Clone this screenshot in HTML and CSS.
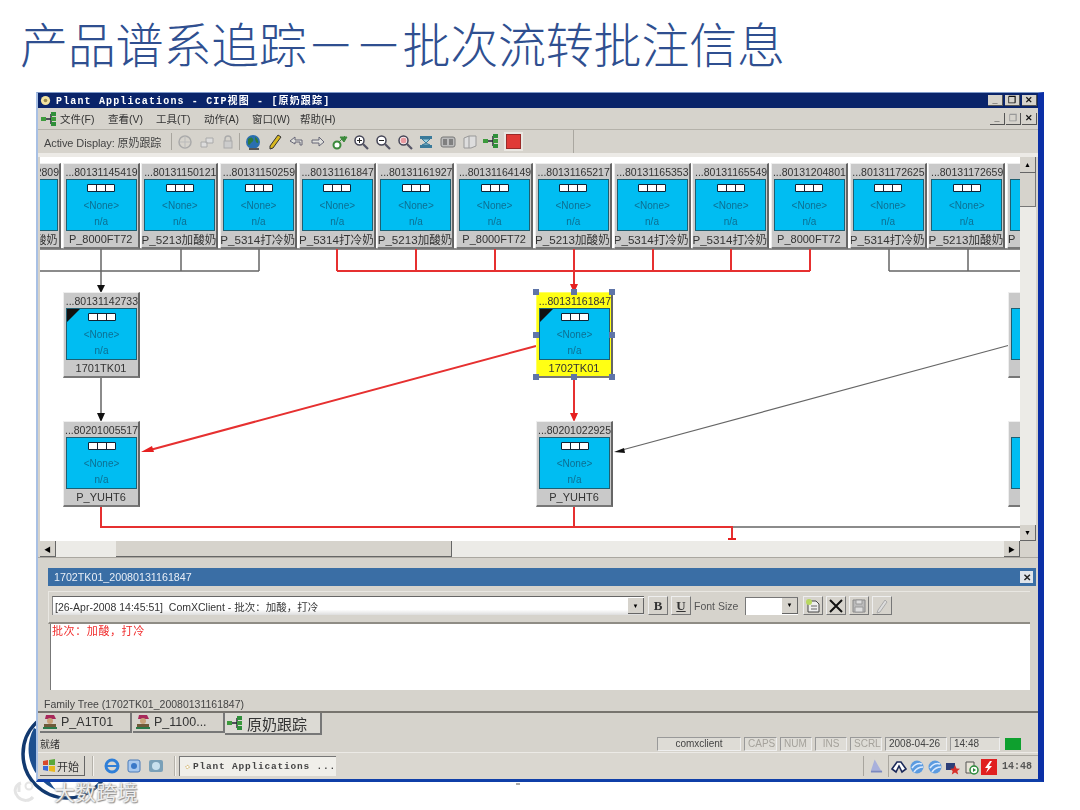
FILE: index.html
```html
<!DOCTYPE html>
<html lang="zh-CN">
<head>
    <meta charset="UTF-8">
    <title>产品谱系追踪－－批次流转批注信息</title>
    <link rel="stylesheet" href="styles.css">
</head>
<body>
    <svg width="0" height="0" class="defs">
        <symbol id="ico-tree" viewBox="0 0 16 14">
            <path d="M3 7h8M10 2v10" stroke="#223" stroke-width="1.4" fill="none"/>
            <rect x="0" y="5" width="5" height="4" fill="#3c9a3c"/>
            <rect x="10" y="0" width="5" height="4" fill="#2f8f3a"/>
            <rect x="10" y="5" width="5" height="4" fill="#3c9a3c"/>
            <rect x="10" y="10" width="5" height="4" fill="#2f8f3a"/>
        </symbol>
        <symbol id="ico-person" viewBox="0 0 16 16">
            <path d="M4 1h8l2 4H3z" fill="#a8285a"/>
            <circle cx="8" cy="7" r="3" fill="#c9a27a"/>
            <path d="M2 10h12v5H2z" fill="#6f5a3a"/>
            <path d="M1 13h14v2H1z" fill="#2a7a4a"/>
        </symbol>
        <symbol id="ico-mag" viewBox="0 0 16 16">
            <circle cx="6.5" cy="6.5" r="4.5" fill="#fff" stroke="#445" stroke-width="1.5"/>
            <path d="M10 10l5 5" stroke="#556" stroke-width="2.2"/>
        </symbol>
        <symbol id="ico-globe" viewBox="0 0 16 16">
            <circle cx="8" cy="8" r="7" fill="#2a6fb0"/>
            <path d="M3 5c2-2 4-2 5 0s-1 3-2 4-2 3-3 1zM10 3c2 1 4 4 3 6-2 0-3-2-3-6z" fill="#2f7a3c"/>
        </symbol>
        <symbol id="ico-ball" viewBox="0 0 16 16">
            <circle cx="8" cy="8" r="6.5" fill="#5b9be0"/>
            <path d="M3 9c3-4 7-5 10-4M5 13c2-3 5-5 9-5" stroke="#dcebff" stroke-width="1.6" fill="none"/>
        </symbol>
    </svg>

    <h1 class="slide-title">产品谱系追踪－－批次流转批注信息</h1>

    <svg class="logo" width="110" height="95" viewBox="0 0 110 95">
        <circle cx="55" cy="42" r="44" fill="#fff" stroke="#12396f" stroke-width="3.5"/>
        <path d="M22 16C10 38 18 66 44 78 30 62 24 40 30 20z" fill="#1d4f8f"/>
    </svg>

    <div class="app">
        <div class="titlebar">
            <svg class="app-ico" width="11" height="11" viewBox="0 0 12 12"><circle cx="6" cy="6" r="5" fill="#f2e2a0"/><circle cx="6" cy="6" r="2" fill="#9a8a50"/></svg>
            <span class="app-name">Plant Applications - CIP视图 - [原奶跟踪]</span>
            <div class="win-btns">
                <b class="win-btn">_</b><b class="win-btn">&#10064;</b><b class="win-btn">✕</b>
            </div>
        </div>

        <div class="menubar">
            <svg class="menu-ico"><use href="#ico-tree"/></svg>
            <span class="menu-item">文件(F)</span>
            <span class="menu-item">查看(V)</span>
            <span class="menu-item">工具(T)</span>
            <span class="menu-item">动作(A)</span>
            <span class="menu-item">窗口(W)</span>
            <span class="menu-item">帮助(H)</span>
            <div class="win-btns flat">
                <b class="win-btn">_</b><b class="win-btn off">&#10064;</b><b class="win-btn">✕</b>
            </div>
        </div>

        <div class="toolbar-row">
            <div class="toolbar">
                <span class="active-display">Active Display: 原奶跟踪</span>
                <i class="tb-sep"></i>
                <span class="tool"><svg viewBox="0 0 16 16"><circle cx="8" cy="8" r="6" fill="none" stroke="#aaa" stroke-width="1.5"/><path d="M3 8h10M8 2v12" stroke="#bbb"/></svg></span>
                <span class="tool"><svg viewBox="0 0 16 16"><path d="M2 8h6v5H2zM7 4h7v5H7z" fill="#ddd" stroke="#aaa"/></svg></span>
                <span class="tool"><svg viewBox="0 0 16 16"><path d="M5 7V5a3 3 0 0 1 6 0v2" fill="none" stroke="#aaa" stroke-width="1.4"/><rect x="4" y="7" width="8" height="7" fill="#ccc" stroke="#aaa"/></svg></span>
                <i class="tb-sep second"></i>
                <span class="tool"><svg viewBox="0 0 16 16"><use href="#ico-globe"/><path d="M4 14h10v2H4z" fill="#555"/></svg></span>
                <span class="tool"><svg viewBox="0 0 16 16"><path d="M11 1l3 2-8 11-3 1 0-3z" fill="#d8b820" stroke="#333"/></svg></span>
                <span class="tool"><svg viewBox="0 0 16 16"><path d="M7 3L2 7l5 3V8h5v3h2V6H7z" fill="#e0e0dc" stroke="#667"/></svg></span>
                <span class="tool"><svg viewBox="0 0 16 16"><path d="M9 3l5 5-5 4v-3H2V6h7z" fill="#e0e0dc" stroke="#667"/></svg></span>
                <span class="tool"><svg viewBox="0 0 16 16"><circle cx="5" cy="11" r="3.5" fill="#fff" stroke="#3c8a3c" stroke-width="2"/><path d="M7 8l6-6M8 3h7l-3 5z" fill="#3c8a3c" stroke="#3c8a3c"/></svg></span>
                <span class="tool"><svg viewBox="0 0 16 16"><use href="#ico-mag"/><path d="M4 6.500h5M6.500 4v5" stroke="#222"/></svg></span>
                <span class="tool"><svg viewBox="0 0 16 16"><use href="#ico-mag"/><path d="M4 6.500h5" stroke="#222"/></svg></span>
                <span class="tool"><svg viewBox="0 0 16 16"><use href="#ico-mag"/><circle cx="6.500" cy="6.500" r="3" fill="#e89aa0"/></svg></span>
                <span class="tool"><svg viewBox="0 0 16 16"><path d="M2 2h12v3H2zM2 11h12v3H2z" fill="#3a7a9a"/><path d="M4 5h8L8 9l4 2H4l4-2z" fill="#9ad0e0" stroke="#3a7a9a"/></svg></span>
                <span class="tool"><svg viewBox="0 0 16 16"><rect x="1" y="3" width="14" height="10" rx="2" fill="#bbb" stroke="#777"/><path d="M6 5v6M10 5v6M4 5v6M12 5v6" stroke="#444"/></svg></span>
                <span class="tool"><svg viewBox="0 0 16 16"><path d="M2 4l5-2h7v10l-5 2H2zM7 2v12" fill="#ddd" stroke="#999"/></svg></span>
                <span class="tool"><svg viewBox="0 0 16 16"><use href="#ico-tree" width="16" height="14"/></svg></span>
                <span class="tool stop"><i></i></span>
            </div>
        </div>

        <div class="diagram-row">
            <div class="canvas">
                <svg class="links" width="980" height="384" viewBox="40 157 980 384">
                    <g class="gray">
                        <path d="M40 249H1020M40 271H259M181 249V271M259 249V271M101 249V286M889 249V271M968 249V271M889 271H1020M101 378V416M732 527H1020"/>
                        <path class="thin" d="M1010 345L622 450"/>
                    </g>
                    <path class="black-head" d="M97 285h8l-4 8zM97 413h8l-4 9zM614 452l10-4 1 5z"/>
                    <g class="red">
                        <path d="M337 249V271M416 249V271M495 249V271M574 249V286M653 249V271M731 249V271M810 249V271M337 271H810M574 378V416M536 346L150 450M101 506V527H732V538M574 506V527"/>
                    </g>
                    <path class="red-head" d="M570 284h8l-4 9zM570 413h8l-4 9zM141 452l11-6 2 6zM728 538h8v2h-8z"/>
                </svg>

                <div class="top-row">
                    <div class="node"><div class="node-id">...80131142809</div><div class="node-body"><div class="lamps"><i></i><i></i><i></i></div><span>&lt;None&gt;</span><span>n/a</span></div><div class="node-name">P_5213加酸奶</div></div>
                    <div class="node"><div class="node-id">...80131145419</div><div class="node-body"><div class="lamps"><i></i><i></i><i></i></div><span>&lt;None&gt;</span><span>n/a</span></div><div class="node-name">P_8000FT72</div></div>
                    <div class="node"><div class="node-id">...80131150121</div><div class="node-body"><div class="lamps"><i></i><i></i><i></i></div><span>&lt;None&gt;</span><span>n/a</span></div><div class="node-name long">P_5213加酸奶</div></div>
                    <div class="node"><div class="node-id">...80131150259</div><div class="node-body"><div class="lamps"><i></i><i></i><i></i></div><span>&lt;None&gt;</span><span>n/a</span></div><div class="node-name long">P_5314打冷奶</div></div>
                    <div class="node"><div class="node-id">...80131161847</div><div class="node-body"><div class="lamps"><i></i><i></i><i></i></div><span>&lt;None&gt;</span><span>n/a</span></div><div class="node-name long">P_5314打冷奶</div></div>
                    <div class="node"><div class="node-id">...80131161927</div><div class="node-body"><div class="lamps"><i></i><i></i><i></i></div><span>&lt;None&gt;</span><span>n/a</span></div><div class="node-name long">P_5213加酸奶</div></div>
                    <div class="node"><div class="node-id">...80131164149</div><div class="node-body"><div class="lamps"><i></i><i></i><i></i></div><span>&lt;None&gt;</span><span>n/a</span></div><div class="node-name">P_8000FT72</div></div>
                    <div class="node"><div class="node-id">...80131165217</div><div class="node-body"><div class="lamps"><i></i><i></i><i></i></div><span>&lt;None&gt;</span><span>n/a</span></div><div class="node-name long">P_5213加酸奶</div></div>
                    <div class="node"><div class="node-id">...80131165353</div><div class="node-body"><div class="lamps"><i></i><i></i><i></i></div><span>&lt;None&gt;</span><span>n/a</span></div><div class="node-name long">P_5314打冷奶</div></div>
                    <div class="node"><div class="node-id">...80131165549</div><div class="node-body"><div class="lamps"><i></i><i></i><i></i></div><span>&lt;None&gt;</span><span>n/a</span></div><div class="node-name long">P_5314打冷奶</div></div>
                    <div class="node"><div class="node-id">...80131204801</div><div class="node-body"><div class="lamps"><i></i><i></i><i></i></div><span>&lt;None&gt;</span><span>n/a</span></div><div class="node-name">P_8000FT72</div></div>
                    <div class="node"><div class="node-id">...80131172625</div><div class="node-body"><div class="lamps"><i></i><i></i><i></i></div><span>&lt;None&gt;</span><span>n/a</span></div><div class="node-name long">P_5314打冷奶</div></div>
                    <div class="node"><div class="node-id">...80131172659</div><div class="node-body"><div class="lamps"><i></i><i></i><i></i></div><span>&lt;None&gt;</span><span>n/a</span></div><div class="node-name long">P_5213加酸奶</div></div>
                    <div class="node"><div class="node-id"></div><div class="node-body"></div><div class="node-name left">P</div></div>
                </div>

                <div class="node free col-a row-2"><div class="node-id">...80131142733</div><div class="node-body flagged"><div class="lamps"><i></i><i></i><i></i></div><span>&lt;None&gt;</span><span>n/a</span></div><div class="node-name">1701TK01</div></div>
                <div class="node free col-a row-3"><div class="node-id">...80201005517</div><div class="node-body"><div class="lamps"><i></i><i></i><i></i></div><span>&lt;None&gt;</span><span>n/a</span></div><div class="node-name">P_YUHT6</div></div>
                <div class="node free col-b row-2 selected">
                    <div class="node-id">...80131161847</div><div class="node-body flagged"><div class="lamps"><i></i><i></i><i></i></div><span>&lt;None&gt;</span><span>n/a</span></div><div class="node-name">1702TK01</div>
                    <i class="grip tl"></i><i class="grip tc"></i><i class="grip tr"></i><i class="grip ml"></i><i class="grip mr"></i><i class="grip bl"></i><i class="grip bc"></i><i class="grip br"></i>
                </div>
                <div class="node free col-b row-3"><div class="node-id">...80201022925</div><div class="node-body"><div class="lamps"><i></i><i></i><i></i></div><span>&lt;None&gt;</span><span>n/a</span></div><div class="node-name">P_YUHT6</div></div>
                <div class="node free col-c row-2"><div class="node-id"></div><div class="node-body"></div><div class="node-name"></div></div>
                <div class="node free col-c row-3"><div class="node-id"></div><div class="node-body"></div><div class="node-name"></div></div>
            </div>
            <div class="vscroll">
                <span class="sb-btn">▲</span>
                <span class="vthumb"></span>
                <span class="vtrack"></span>
                <span class="sb-btn">▼</span>
            </div>
        </div>

        <div class="hscroll">
            <span class="sb-btn">◀</span>
            <span class="hpad"></span>
            <span class="hthumb"></span>
            <span class="htrack"></span>
            <span class="sb-btn">▶</span>
        </div>

        <div class="panel">
            <div class="panel-head">
                <span>1702TK01_20080131161847</span>
                <b class="panel-close">✕</b>
            </div>
            <div class="comment-bar">
                <div class="comment-select">
                    <span class="comment-text">[26-Apr-2008 14:45:51]&nbsp; ComXClient - 批次：加酸，打冷</span>
                    <span class="combo-arrow">▼</span>
                </div>
                <span class="fmt-btn serif">B</span>
                <span class="fmt-btn serif under">U</span>
                <span class="font-label">Font Size</span>
                <div class="size-select"><span class="combo-arrow">▼</span></div>
                <span class="fmt-btn"><svg viewBox="0 0 16 16"><path d="M3 3h8l3 3v8H3z" fill="#eee" stroke="#444"/><circle cx="4" cy="4" r="3" fill="#b8d860"/><path d="M6 8h6M6 11h6" stroke="#666"/></svg></span>
                <span class="fmt-btn"><svg viewBox="0 0 16 16"><path d="M2 2l12 12M14 2L2 14" stroke="#111" stroke-width="2"/></svg></span>
                <span class="fmt-btn"><svg viewBox="0 0 16 16"><path d="M2 2h12v12H2z" fill="#bbb" stroke="#888"/><path d="M5 2h6v4H5zM4 9h8v5H4z" fill="#ddd" stroke="#999"/></svg></span>
                <span class="fmt-btn"><svg viewBox="0 0 16 16"><path d="M11 2l2 2-7 10-3 1 1-3z" fill="#ddd" stroke="#aaa"/></svg></span>
            </div>
            <div class="comment-body">批次：加酸，打冷</div>
        </div>

        <div class="family-bar"><span>Family Tree (1702TK01_20080131161847)</span></div>

        <div class="tabs">
            <span class="tab"><svg class="tab-ico"><use href="#ico-person"/></svg>P_A1T01</span>
            <span class="tab"><svg class="tab-ico"><use href="#ico-person"/></svg>P_1100...</span>
            <span class="tab current"><svg class="tab-ico wide"><use href="#ico-tree"/></svg>原奶跟踪</span>
        </div>

        <div class="statusbar">
            <span class="status-msg">就绪</span>
            <span class="cell user">comxclient</span>
            <span class="cell caps off">CAPS</span>
            <span class="cell num off">NUM</span>
            <span class="cell ins off">INS</span>
            <span class="cell scrl off">SCRL</span>
            <span class="cell date">2008-04-26</span>
            <span class="cell time">14:48</span>
            <i class="led"></i>
        </div>

        <div class="taskbar">
            <span class="start"><svg width="14" height="14" viewBox="0 0 14 14"><path d="M1 2l5-1v5H1z" fill="#d8482a"/><path d="M7 1l6-1v6H7z" fill="#5aa83a"/><path d="M1 7h5v5l-5-1z" fill="#3a6ad8"/><path d="M7 7h6v6l-6-1z" fill="#e8b820"/></svg>开始</span>
            <i class="task-sep"></i>
            <span class="quick"><svg viewBox="0 0 16 16"><circle cx="8" cy="8" r="6" fill="none" stroke="#2f7fd8" stroke-width="3"/><path d="M2 8h12" stroke="#2f7fd8" stroke-width="2"/></svg></span>
            <span class="quick"><svg viewBox="0 0 16 16"><rect x="2" y="2" width="12" height="12" rx="2" fill="#a8c8ee" stroke="#4a7ab8"/><circle cx="8" cy="8" r="3" fill="#3a78c8"/></svg></span>
            <span class="quick"><svg viewBox="0 0 16 16"><rect x="1" y="2" width="14" height="12" rx="2" fill="#7aa0b8"/><circle cx="8" cy="8" r="4" fill="#c8e0ee"/></svg></span>
            <i class="task-sep"></i>
            <span class="task-btn"><svg width="14" height="14" viewBox="0 0 14 14"><circle cx="7" cy="7" r="4.500" fill="#fff" stroke="#c8a040" stroke-width="2.500" stroke-dasharray="4 2"/></svg>Plant Applications ...</span>
            <i class="tray-sep"></i>
            <span class="tray-quick"><svg viewBox="0 0 14 16"><path d="M5 1l7 12H1z" fill="#a8b0dc"/><path d="M1 13h12v2H1z" fill="#7a88c0"/></svg></span>
            <div class="tray">
                <svg viewBox="0 0 16 16"><path d="M1 10L6 3h4l5 7-4 3-3-6-3 6z" fill="#fff" stroke="#1c2a5a" stroke-width="1.600"/></svg>
                <svg viewBox="0 0 16 16"><use href="#ico-ball"/></svg>
                <svg viewBox="0 0 16 16"><use href="#ico-ball"/></svg>
                <svg viewBox="0 0 16 16"><path d="M1 4h9v7H1z" fill="#2c3e78"/><path d="M10 6l1.500 3.500 3.500.3-2.700 2.200.9 3.500-3.200-2-3.200 2 .9-3.500L5 9.800l3.500-.3z" fill="#d8302a"/></svg>
                <svg viewBox="0 0 16 16"><path d="M3 3h8v11H3z" fill="#e8e4d8" stroke="#555"/><circle cx="11" cy="11" r="4" fill="#fff" stroke="#2a8a3a" stroke-width="1.500"/><path d="M10 9l3 2-3 2z" fill="#2a8a3a"/></svg>
                <svg viewBox="0 0 16 16"><rect width="16" height="16" fill="#e02020"/><path d="M9 2L4 9h3l-2 5 6-7H8l3-5z" fill="#fff"/></svg>
                <span class="clock">14:48</span>
            </div>
        </div>
    </div>

    <div class="watermark">
        <svg width="24" height="22" viewBox="0 0 24 22"><path d="M9 3C3 5 1 12 6 17s12 4 15 0" fill="none" stroke="#e4e4e4" stroke-width="3"/><path d="M7 3v9" stroke="#e4e4e4" stroke-width="3"/><circle cx="17" cy="6" r="3.500" fill="none" stroke="#e4e4e4" stroke-width="2"/></svg>
        <span>大数跨境</span>
    </div>
    <i class="stray-tick"></i>
</body>
</html>
```

FILE: styles.css
```css
* {
    box-sizing: border-box;
}

html, body {
    margin: 0;
    padding: 0;
}

body {
    position: relative;
    width: 1080px;
    height: 810px;
    overflow: hidden;
    background-color: #fff;
    font-family: "Liberation Sans", "Noto Sans CJK SC", sans-serif;
    font-size: 10px;
    color: #333;
}

.defs {
    position: absolute;
}

.slide-title {
    height: 92px;
    margin: 0;
    padding: 0 0 9px 20px;
    display: flex;
    align-items: center;
    font-family: "Noto Sans CJK SC", sans-serif;
    font-size: 48px;
    font-weight: 300;
    letter-spacing: -0.2px;
    color: #2f4f90;
    white-space: nowrap;
}

/* logo peeks out from behind the window */
.logo {
    position: absolute;
    left: 12px;
    top: 712px;
}

.watermark {
    position: absolute;
    left: 12px;
    top: 776px;
    display: flex;
    align-items: center;
    gap: 18px;
    font-family: "Noto Sans CJK SC", sans-serif;
    font-size: 21px;
    color: #eee;
    text-shadow: 0 0 2px #777, 1px 1px 1px #999;
}

.stray-tick {
    position: absolute;
    left: 516px;
    top: 783px;
    width: 4px;
    height: 2px;
    background-color: #aaa;
}

.app {
    position: relative;
    width: 1008px;
    height: 690px;
    margin-left: 36px;
    display: flex;
    flex-direction: column;
    background-color: #d6d3cc;
    border-top: 1px solid #7f9ac8;
    border-left: 2px solid #a8c0e4;
    border-right: 6px solid #0b2fa6;
    border-bottom: 3px solid #0f3fa8;
    filter: blur(0.45px);
}

.titlebar {
    height: 15px;
    flex: none;
    display: flex;
    align-items: center;
    padding-left: 2px;
    background-color: #0a246a;
    color: #fff;
}

.app-ico {
    margin-right: 5px;
}

.app-name {
    margin-top: -2px;
    font-family: "Liberation Mono", "Noto Sans CJK SC", monospace;
    font-size: 10px;
    font-weight: bold;
    letter-spacing: 1.15px;
    white-space: nowrap;
}

.win-btns {
    margin-left: auto;
    margin-right: 1px;
    display: flex;
    gap: 2px;
}

.win-btn {
    width: 15px;
    height: 11px;
    display: flex;
    align-items: center;
    justify-content: center;
    background-color: #d6d3cc;
    border-right: 1px solid #555;
    border-bottom: 1px solid #555;
    font-size: 9px;
    line-height: 1;
    color: #111;
}

.win-btns.flat {
    gap: 1px;
}

.win-btns.flat .win-btn {
    height: 12px;
}

.win-btn.off {
    color: #999;
}

.menubar {
    height: 22px;
    flex: none;
    display: flex;
    align-items: center;
    padding-left: 3px;
    border-bottom: 1px solid #b5b2aa;
    font-size: 10.500px;
}

.menu-ico {
    width: 16px;
    height: 14px;
    margin-right: 3px;
}

.menu-item {
    width: 48px;
    white-space: nowrap;
}

.toolbar-row {
    height: 27px;
    flex: none;
    background: linear-gradient(#d6d3cc 0, #d6d3cc 23px, #eceae6 23px);
}

.toolbar {
    width: 536px;
    height: 23px;
    display: flex;
    align-items: center;
    padding-left: 6px;
    border-right: 1px solid #aaa7a0;
}

.active-display {
    width: 127px;
    font-size: 11px;
    letter-spacing: -0.1px;
    white-space: nowrap;
    color: #444;
}

.tb-sep {
    width: 1px;
    height: 17px;
    margin-right: 2px;
    background-color: #a8a59e;
}

.tb-sep.second {
    margin-right: 2px;
}

.tool {
    width: 21.700px;
    height: 18px;
    display: flex;
    align-items: center;
    justify-content: center;
}

.tool svg {
    width: 16px;
    height: 16px;
}

.tool.stop i {
    display: block;
    width: 15px;
    height: 15px;
    background-color: #e03a36;
    border: 1px solid #9a2a28;
    box-shadow: 0 0 0 2px #e9e7e2;
}

.diagram-row {
    height: 384px;
    flex: none;
    display: flex;
    padding: 0 2px;
}

.canvas {
    position: relative;
    width: 980px;
    height: 384px;
    overflow: hidden;
    background-color: #fff;
}

.links {
    position: absolute;
    left: 0;
    top: 0;
}

.links path {
    fill: none;
}

.gray path {
    stroke: #666;
    stroke-width: 1.500;
}

.gray path.thin {
    stroke-width: 1.200;
}

.red path {
    stroke: #e63030;
    stroke-width: 2;
}

.links .black-head {
    fill: #111;
}

.links .red-head {
    fill: #e62020;
}

.top-row {
    position: absolute;
    left: -56px;
    top: 6px;
    display: flex;
    gap: 1.700px;
}

.node {
    width: 77px;
    height: 86px;
    flex: none;
    display: flex;
    flex-direction: column;
    background-color: #c9c9c9;
    border-top: 1px solid #eee;
    border-left: 1px solid #eee;
    border-right: 2px solid #666;
    border-bottom: 2px solid #777;
}

.node.free {
    position: absolute;
}

.col-a { left: 23px; }
.col-b { left: 496px; }
.col-c { left: 968px; }
.row-2 { top: 135px; }
.row-3 { top: 264px; }

.node-id {
    height: 15px;
    flex: none;
    display: flex;
    justify-content: flex-end;
    align-items: center;
    overflow: hidden;
    font-size: 10.500px;
    white-space: nowrap;
    color: #333;
}

.node-body {
    position: relative;
    width: 71px;
    height: 52px;
    flex: none;
    margin-left: 2px;
    display: flex;
    flex-direction: column;
    align-items: center;
    background-color: #00bdf2;
    border: 1px solid #1d5f72;
    font-size: 10px;
    line-height: 16px;
    color: #0c6f92;
}

.node-body.flagged::before {
    content: "";
    position: absolute;
    left: 0;
    top: 0;
    border-top: 13px solid #111;
    border-right: 13px solid transparent;
}

.lamps {
    height: 8px;
    margin: 4px 0 6px;
    display: flex;
    border: 1px solid #123;
    border-radius: 1px;
    background-color: #123;
    gap: 1px;
}

.lamps i {
    width: 8px;
    background-color: #fff;
}

.node-name {
    flex: 1;
    display: flex;
    justify-content: center;
    align-items: center;
    overflow: hidden;
    font-size: 11px;
    white-space: nowrap;
    color: #333;
}

.node-name.long {
    justify-content: flex-end;
    font-size: 11.600px;
}

.node-name.left {
    justify-content: flex-start;
}

.node.selected {
    background-color: #ffff14;
    border-left-color: #ffff60;
    border-top-color: #ffff60;
}

.grip {
    position: absolute;
    width: 6px;
    height: 6px;
    background-color: #5f75a8;
}

.tl { left: -4px; top: -4px; }
.tc { left: 34px; top: -4px; }
.tr { right: -4px; top: -4px; }
.ml { left: -4px; top: 39px; }
.mr { right: -4px; top: 39px; }
.bl { left: -4px; bottom: -4px; }
.bc { left: 34px; bottom: -4px; }
.br { right: -4px; bottom: -4px; }

.vscroll {
    width: 16px;
    display: flex;
    flex-direction: column;
}

.sb-btn {
    width: 16px;
    height: 16px;
    flex: none;
    display: flex;
    align-items: center;
    justify-content: center;
    background-color: #d6d3cc;
    border-right: 1px solid #666;
    border-bottom: 1px solid #666;
    font-size: 7px;
    color: #000;
}

.vthumb {
    height: 34px;
    flex: none;
    background-color: #d6d3cc;
    border-bottom: 1px solid #777;
    border-right: 1px solid #777;
}

.vtrack {
    flex: 1;
    background-color: #ecebe7;
}

.hscroll {
    height: 16px;
    flex: none;
    display: flex;
    margin: 0 18px 0 2px;
}

.hpad {
    width: 60px;
    background-color: #ecebe7;
}

.hthumb {
    width: 336px;
    background-color: #d6d3cc;
    border-right: 1px solid #666;
    border-bottom: 1px solid #666;
}

.htrack {
    flex: 1;
    background-color: #ecebe7;
}

.panel {
    height: 139px;
    flex: none;
    padding: 10px 2px 0 10px;
    border-top: 1px solid #aaa7a0;
}

.panel-head {
    height: 18px;
    display: flex;
    align-items: center;
    justify-content: space-between;
    padding: 0 3px 0 6px;
    background-color: #3a6ea5;
    font-size: 10.700px;
    color: #e8eef6;
}

.panel-close {
    width: 13px;
    height: 12px;
    display: flex;
    align-items: center;
    justify-content: center;
    background-color: #dfe4ea;
    font-size: 10px;
    color: #222;
}

.comment-bar {
    width: 982px;
    height: 33px;
    margin-top: 5px;
    display: flex;
    align-items: center;
    padding: 0 0 3px 3px;
    border-top: 1px solid #e9e7e2;
    border-left: 1px solid #e9e7e2;
    border-bottom: 2px solid #8f8c85;
}

.comment-select {
    width: 592px;
    height: 19px;
    display: flex;
    align-items: center;
    justify-content: space-between;
    margin-right: 4px;
    padding-left: 2px;
    background: linear-gradient(#fff 70%, #ddd);
    border-top: 1px solid #666;
    border-left: 1px solid #888;
    font-size: 10.500px;
}

.combo-arrow {
    width: 16px;
    height: 16px;
    display: flex;
    align-items: center;
    justify-content: center;
    background-color: #d6d3cc;
    border-right: 1px solid #666;
    border-bottom: 1px solid #666;
    font-size: 6px;
    color: #000;
}

.fmt-btn {
    width: 20px;
    height: 19px;
    margin-right: 3px;
    flex: none;
    display: flex;
    align-items: center;
    justify-content: center;
    border-right: 1px solid #777;
    border-bottom: 1px solid #777;
    border-top: 1px solid #eee;
    border-left: 1px solid #eee;
    font-size: 11px;
}

.fmt-btn svg {
    width: 16px;
    height: 16px;
}

.serif {
    font-family: "Liberation Serif", serif;
    font-weight: bold;
    font-size: 13px;
}

.under {
    text-decoration: underline;
}

.font-label {
    width: 51px;
    font-size: 10.500px;
    color: #555;
    white-space: nowrap;
}

.size-select {
    width: 53px;
    height: 18px;
    margin-right: 5px;
    display: flex;
    justify-content: flex-end;
    background-color: #fff;
    border-top: 1px solid #777;
    border-left: 1px solid #777;
}

.comment-body {
    width: 980px;
    height: 66px;
    margin-left: 2px;
    padding: 0 0 0 1px;
    background-color: #fff;
    border-left: 1px solid #777;
    font-size: 11px;
    line-height: 15px;
    letter-spacing: 0.600px;
    color: #f02a2a;
}

.family-bar {
    height: 17px;
    flex: none;
    padding: 1px 0 0 6px;
    border-bottom: 2px solid #77746e;
    font-size: 10.500px;
    line-height: 14px;
    color: #444;
}

.family-bar span {
    display: block;
}

.tabs {
    height: 22px;
    flex: none;
    display: flex;
    padding-left: 2px;
    font-size: 12.500px;
}

.tab {
    width: 92px;
    height: 20px;
    display: flex;
    align-items: center;
    gap: 3px;
    padding-left: 2px;
    border-right: 2px solid #777;
    border-bottom: 2px solid #777;
    margin-right: 1px;
    color: #333;
}

.tab.current {
    width: 97px;
    height: 22px;
    margin-left: -1px;
    background-color: #dcdad4;
    font-size: 15px;
}

.tab-ico {
    width: 16px;
    height: 16px;
    flex: none;
}

.tab-ico.wide {
    height: 14px;
    margin-right: 1px;
}

.statusbar {
    height: 17px;
    flex: none;
    display: flex;
    align-items: center;
    padding-left: 2px;
    font-size: 10px;
    background-color: #d6d3cc;
}

.status-msg {
    width: 617px;
}

.cell {
    height: 14px;
    margin-right: 3px;
    padding: 0 3px;
    display: flex;
    align-items: center;
    border-top: 1px solid #999;
    border-left: 1px solid #999;
    border-bottom: 1px solid #eee;
    border-right: 1px solid #eee;
    white-space: nowrap;
    background-color: #dedcd6;
}

.cell.off {
    color: #a5a29b;
}

.user { width: 84px; justify-content: center; color: #444; }
.caps { width: 33px; }
.num { width: 32px; }
.ins { width: 32px; justify-content: center; }
.scrl { width: 32px; }
.date { width: 62px; color: #444; }
.time { width: 50px; color: #444; }

.led {
    width: 16px;
    height: 12px;
    margin-left: 2px;
    background-color: #0ea02e;
}

.taskbar {
    height: 27px;
    flex: none;
    display: flex;
    align-items: center;
    padding-left: 2px;
    border-top: 1px solid #eceae6;
    background-color: #dad7d0;
}

.start {
    width: 45px;
    height: 20px;
    display: flex;
    align-items: center;
    gap: 1px;
    padding-left: 2px;
    border-right: 1px solid #666;
    border-bottom: 1px solid #666;
    font-size: 11px;
}

.task-sep {
    width: 2px;
    height: 20px;
    margin: 0 7px;
    background-color: #b5b2aa;
    border-right: 1px solid #f4f2ee;
}

.quick {
    width: 22px;
    height: 20px;
    display: flex;
    align-items: center;
    justify-content: center;
}

.quick svg {
    width: 16px;
    height: 16px;
}

.task-btn {
    width: 157px;
    height: 20px;
    margin-left: -4px;
    display: flex;
    align-items: center;
    gap: 3px;
    padding-left: 5px;
    background-color: #f0efea;
    border-top: 1px solid #777;
    border-left: 1px solid #777;
    font-family: "Liberation Mono", monospace;
    font-size: 9.500px;
    font-weight: bold;
    letter-spacing: 0.800px;
    white-space: nowrap;
    color: #444;
}

.tray-sep {
    width: 1px;
    height: 20px;
    margin-left: 527px;
    background-color: #a8a59e;
}

.tray-quick {
    width: 24px;
    display: flex;
    justify-content: center;
}

.tray-quick svg {
    width: 13px;
    height: 16px;
}

.tray {
    height: 22px;
    flex: 1;
    display: flex;
    align-items: center;
    gap: 2px;
    padding-left: 2px;
    border-top: 1px solid #aaa7a0;
    border-left: 1px solid #aaa7a0;
}

.tray svg {
    width: 16px;
    height: 16px;
    flex: none;
}

.clock {
    margin-left: 3px;
    font-family: "Liberation Mono", monospace;
    font-size: 10px;
    font-weight: bold;
    color: #555;
}
```
